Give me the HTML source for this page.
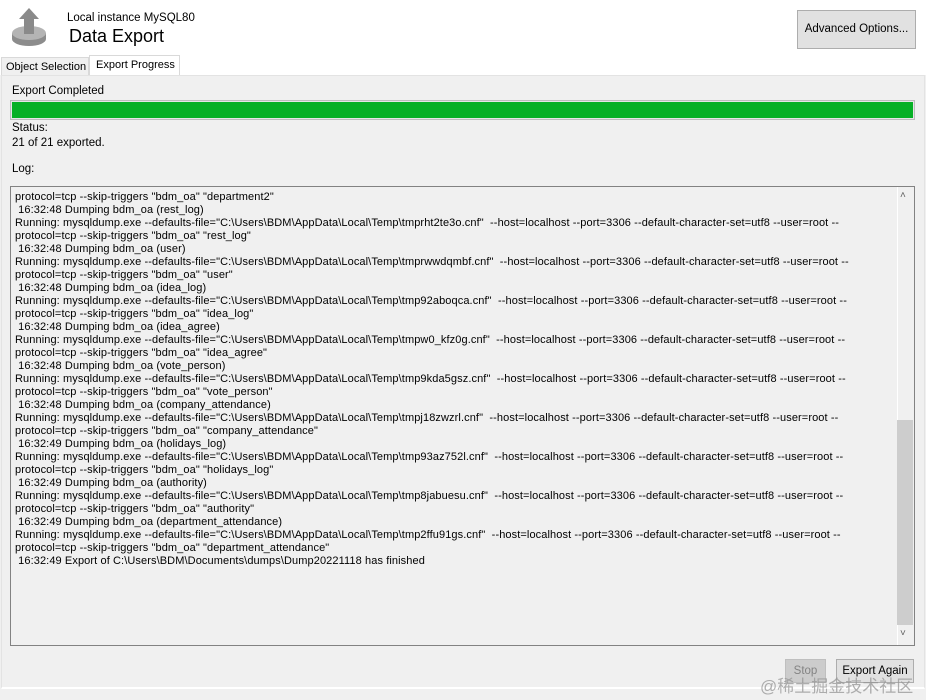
<!DOCTYPE html>
<html><head><meta charset="utf-8"><style>
*{margin:0;padding:0;box-sizing:border-box}
body{width:926px;height:700px;background:#f0f0f0;font-family:"Liberation Sans",sans-serif;font-size:11px;color:#000;position:relative;overflow:hidden}
.a{position:absolute;white-space:nowrap}
.btn{position:absolute;border:1px solid #adadad;background:#e1e1e1;font-size:11.5px;text-align:center;white-space:nowrap}
#log div{height:13px;line-height:13px;white-space:pre;font-size:11px;letter-spacing:0.1px}
</style></head><body>
<div class="a" style="left:0;top:0;width:926px;height:75px;background:#fff"></div>
<svg class="a" style="left:10px;top:6px" width="40" height="42" viewBox="0 0 40 42">
<ellipse cx="19" cy="33" rx="17" ry="7" fill="#8c8c8c"/>
<rect x="2" y="27" width="34" height="6" fill="#8c8c8c"/>
<ellipse cx="19" cy="27" rx="17" ry="7" fill="#b4b4b4"/>
<rect x="14" y="12" width="10" height="16" fill="#8a8a8a"/>
<polygon points="9,13 19,2 29,13" fill="#8a8a8a"/>
</svg>
<div class="a" style="left:67px;top:12px;font-size:11.5px">Local instance MySQL80</div>
<div class="a" style="left:69px;top:26px;font-size:18px">Data Export</div>
<div class="btn" style="left:797px;top:10px;width:119px;height:39px;line-height:37px">Advanced Options...</div>
<div class="a" style="left:1px;top:57px;width:88px;height:18px;border:1px solid #d9d9d9;border-bottom:none;background:#f0f0f0;font-size:11px;padding:3px 0 0 4px">Object Selection</div>
<div class="a" style="left:89px;top:55px;width:91px;height:21px;border:1px solid #d9d9d9;border-bottom:none;background:#fff;font-size:11px;padding:3px 0 0 6px">Export Progress</div>
<div class="a" style="left:1px;top:75px;width:924px;height:614px;border:1px solid #e3e3e3;border-bottom:2px solid #fff"></div>
<div class="a" style="left:12px;top:85px;font-size:11.5px">Export Completed</div>
<div class="a" style="left:10px;top:100px;width:905px;height:20px;border:1px solid #bcbcbc;background:#e6e6e6;padding:1px"><div style="width:100%;height:100%;background:#06b025"></div></div>
<div class="a" style="left:12px;top:122px;font-size:11.5px">Status:</div>
<div class="a" style="left:12px;top:137px;font-size:11.5px">21 of 21 exported.</div>
<div class="a" style="left:12px;top:163px;font-size:11.5px">Log:</div>
<div class="a" style="left:10px;top:186px;width:905px;height:460px;border:1px solid #828282;background:#f0f0f0"></div>
<div class="a" style="left:897px;top:187px;width:16px;height:458px;background:#f0f0f0;border-left:1px solid #fff"></div>
<div class="a" style="left:897px;top:420px;width:16px;height:205px;background:#cdcdcd"></div>
<div class="a" style="left:900px;top:190px;font-size:10px;color:#606060">&#708;</div>
<div class="a" style="left:900px;top:628px;font-size:10px;color:#606060">&#709;</div>
<div id="log" class="a" style="left:15px;top:191px;width:880px">
<div>protocol=tcp --skip-triggers "bdm_oa" "department2"</div>
<div> 16:32:48 Dumping bdm_oa (rest_log)</div>
<div>Running: mysqldump.exe --defaults-file="C:\Users\BDM\AppData\Local\Temp\tmprht2te3o.cnf"  --host=localhost --port=3306 --default-character-set=utf8 --user=root --</div>
<div>protocol=tcp --skip-triggers "bdm_oa" "rest_log"</div>
<div> 16:32:48 Dumping bdm_oa (user)</div>
<div>Running: mysqldump.exe --defaults-file="C:\Users\BDM\AppData\Local\Temp\tmprwwdqmbf.cnf"  --host=localhost --port=3306 --default-character-set=utf8 --user=root --</div>
<div>protocol=tcp --skip-triggers "bdm_oa" "user"</div>
<div> 16:32:48 Dumping bdm_oa (idea_log)</div>
<div>Running: mysqldump.exe --defaults-file="C:\Users\BDM\AppData\Local\Temp\tmp92aboqca.cnf"  --host=localhost --port=3306 --default-character-set=utf8 --user=root --</div>
<div>protocol=tcp --skip-triggers "bdm_oa" "idea_log"</div>
<div> 16:32:48 Dumping bdm_oa (idea_agree)</div>
<div>Running: mysqldump.exe --defaults-file="C:\Users\BDM\AppData\Local\Temp\tmpw0_kfz0g.cnf"  --host=localhost --port=3306 --default-character-set=utf8 --user=root --</div>
<div>protocol=tcp --skip-triggers "bdm_oa" "idea_agree"</div>
<div> 16:32:48 Dumping bdm_oa (vote_person)</div>
<div>Running: mysqldump.exe --defaults-file="C:\Users\BDM\AppData\Local\Temp\tmp9kda5gsz.cnf"  --host=localhost --port=3306 --default-character-set=utf8 --user=root --</div>
<div>protocol=tcp --skip-triggers "bdm_oa" "vote_person"</div>
<div> 16:32:48 Dumping bdm_oa (company_attendance)</div>
<div>Running: mysqldump.exe --defaults-file="C:\Users\BDM\AppData\Local\Temp\tmpj18zwzrl.cnf"  --host=localhost --port=3306 --default-character-set=utf8 --user=root --</div>
<div>protocol=tcp --skip-triggers "bdm_oa" "company_attendance"</div>
<div> 16:32:49 Dumping bdm_oa (holidays_log)</div>
<div>Running: mysqldump.exe --defaults-file="C:\Users\BDM\AppData\Local\Temp\tmp93az752l.cnf"  --host=localhost --port=3306 --default-character-set=utf8 --user=root --</div>
<div>protocol=tcp --skip-triggers "bdm_oa" "holidays_log"</div>
<div> 16:32:49 Dumping bdm_oa (authority)</div>
<div>Running: mysqldump.exe --defaults-file="C:\Users\BDM\AppData\Local\Temp\tmp8jabuesu.cnf"  --host=localhost --port=3306 --default-character-set=utf8 --user=root --</div>
<div>protocol=tcp --skip-triggers "bdm_oa" "authority"</div>
<div> 16:32:49 Dumping bdm_oa (department_attendance)</div>
<div>Running: mysqldump.exe --defaults-file="C:\Users\BDM\AppData\Local\Temp\tmp2ffu91gs.cnf"  --host=localhost --port=3306 --default-character-set=utf8 --user=root --</div>
<div>protocol=tcp --skip-triggers "bdm_oa" "department_attendance"</div>
<div> 16:32:49 Export of C:\Users\BDM\Documents\dumps\Dump20221118 has finished</div>
</div>
<div class="btn" style="left:785px;top:659px;width:41px;height:24px;line-height:22px;background:#cccccc;border-color:#bfbfbf;color:#838383">Stop</div>
<div class="btn" style="left:836px;top:659px;width:78px;height:24px;line-height:22px">Export Again</div>
<div class="a" style="left:760px;top:672px;font-size:17px;color:rgba(150,150,150,0.75);font-family:'Liberation Sans','Noto Sans CJK SC',sans-serif">@稀土掘金技术社区</div>
</body></html>
